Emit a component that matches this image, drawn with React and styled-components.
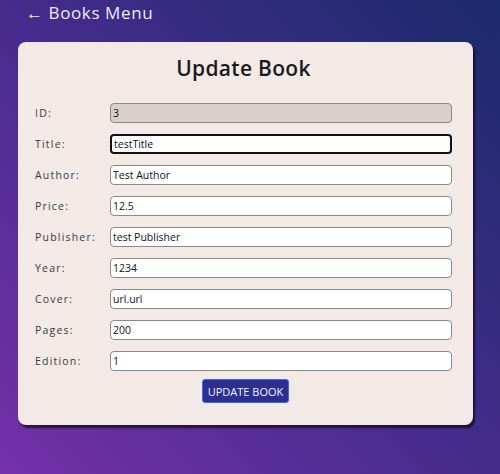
import React, { useState } from "react";
import styled, { createGlobalStyle } from "styled-components";

const GlobalStyle = createGlobalStyle`
  html, body {
    margin: 0;
    padding: 0;
  }
  body {
    width: 500px;
    height: 474px;
    overflow: hidden;
    font-family: "Open Sans", "Noto Sans", sans-serif;
    background: linear-gradient(45deg, #7431a8 0%, #452c8c 50%, #1a2a6a 100%);
  }
`;

const Page = styled.div`
  display: flex;
  flex-direction: column;
  height: 474px;
`;

const BackLink = styled.a`
  display: block;
  padding: 1px 0 0 26px;
  height: 42px;
  box-sizing: border-box;
  font-size: 17px;
  letter-spacing: 0.6px;
  color: #ecebf6;
  text-decoration: none;
  cursor: pointer;
`;

const Card = styled.form`
  margin-left: 18px;
  width: 455px;
  box-sizing: border-box;
  padding: 13px 21px 22px 17px;
  background: #f3e9e7;
  border-radius: 8px;
  box-shadow: 2px 3px 2px rgba(20, 10, 30, 0.75);
  display: flex;
  flex-direction: column;
  align-items: stretch;
`;

const Title = styled.h1`
  margin: 0 0 22px;
  text-align: center;
  font-size: 21px;
  line-height: 26px;
  font-weight: 600;
  letter-spacing: 0.3px;
  color: #1b1b1b;
`;

const Fields = styled.div`
  display: grid;
  grid-template-columns: 75px 1fr;
  row-gap: 11px;
  align-items: center;
`;

const Label = styled.label`
  font-size: 10.5px;
  letter-spacing: 1.2px;
  color: #3a3a3a;
`;

const Input = styled.input`
  height: 20px;
  box-sizing: border-box;
  padding: 0 2px;
  font-family: "Open Sans", "Noto Sans", sans-serif;
  font-size: 10.5px;
  color: #111;
  background: ${(p) => (p.readOnly ? "#d9cfcb" : "#ffffff")};
  border: ${(p) => (p.active ? "2px solid #111" : "1px solid #8d8785")};
  border-radius: 4px;
  outline: none;
`;

const SubmitButton = styled.button`
  align-self: center;
  margin: 8px 0 0 4px;
  width: 87px;
  height: 24px;
  padding: 0;
  background: #2d2e8e;
  color: #f4f4ff;
  border: 1px solid #3c6cf2;
  border-radius: 3px;
  font-family: "Open Sans", "Noto Sans", sans-serif;
  font-size: 11px;
  cursor: pointer;
`;

const initialBook = [
  { key: "id", label: "ID:", value: "3", readOnly: true },
  { key: "title", label: "Title:", value: "testTitle", active: true },
  { key: "author", label: "Author:", value: "Test Author" },
  { key: "price", label: "Price:", value: "12.5" },
  { key: "publisher", label: "Publisher:", value: "test Publisher" },
  { key: "year", label: "Year:", value: "1234" },
  { key: "cover", label: "Cover:", value: "url.url" },
  { key: "pages", label: "Pages:", value: "200" },
  { key: "edition", label: "Edition:", value: "1" },
];

export default function App() {
  const [fields, setFields] = useState(initialBook);

  const update = (key, value) =>
    setFields((prev) => prev.map((f) => (f.key === key ? { ...f, value } : f)));

  return (
    <Page>
      <GlobalStyle />
      <BackLink>← Books Menu</BackLink>
      <Card onSubmit={(e) => e.preventDefault()}>
        <Title>Update Book</Title>
        <Fields>
          {fields.map((f) => (
            <React.Fragment key={f.key}>
              <Label htmlFor={f.key}>{f.label}</Label>
              <Input
                id={f.key}
                value={f.value}
                readOnly={f.readOnly}
                active={f.active}
                onChange={(e) => update(f.key, e.target.value)}
              />
            </React.Fragment>
          ))}
        </Fields>
        <SubmitButton type="submit">UPDATE BOOK</SubmitButton>
      </Card>
    </Page>
  );
}
